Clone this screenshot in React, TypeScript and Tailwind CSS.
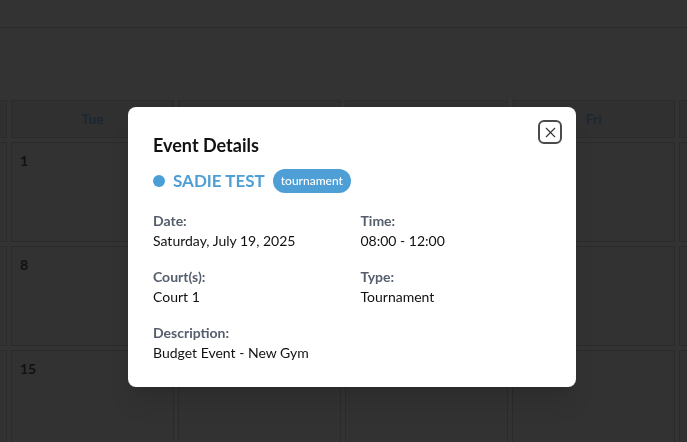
import React, { FC } from "react";
import { X } from "lucide-react";

const days = ["Sun", "Mon", "Tue", "Wed", "Thu", "Fri", "Sat"];

// dates shown in the first column of each week row (Tue column)
const weeks = [
  ["", "", "1", "2", "3", "4", "5"],
  ["", "7", "8", "9", "10", "11", "12"],
  ["", "14", "15", "16", "17", "18", "19"],
];

const App: FC = () => {
  return (
    <div
      className="relative w-[687px] h-[442px] overflow-hidden bg-[#333333]"
      style={{ fontFamily: "Lato, 'Noto Sans', sans-serif" }}
    >
      {/* Top bar */}
      <div className="h-[28px] border-b border-[#2a2a2a]" />

      {/* Calendar (scrolled so Tue is first visible column) */}
      <div className="pt-[72px] ml-[-323px]">
        <div className="grid grid-cols-[repeat(7,163px)] gap-1">
          {days.map((d) => (
            <div
              key={d}
              className="h-[38px] flex items-center justify-center border border-[#2b2b2b] bg-[#303030] text-sm font-bold text-[#1c2733]"
            >
              {/* only these two are readable behind the dialog */}
              {d === "Tue" || d === "Fri" ? d : ""}
            </div>
          ))}
          {weeks.flat().map((n, i) => (
            <div
              key={i}
              className="h-[100px] p-2 border border-[#2b2b2b] bg-[#323232] text-sm font-bold text-[#111111]"
            >
              {i % 7 === 2 ? n : ""}
            </div>
          ))}
        </div>
      </div>

      {/* Dialog */}
      <div className="fixed inset-0 flex items-start justify-start pt-[107px] pl-[128px]">
        <div className="relative w-[448px] bg-white rounded-lg shadow-xl pt-6 pb-6 pl-[25px] pr-6">
          <button className="absolute top-[13px] right-[14px] w-6 h-6 flex items-center justify-center rounded-md border-2 border-[#4b4b4b] text-[#333]">
            <X size={17} strokeWidth={1.5} />
          </button>

          <h2 className="text-lg font-bold text-[#111] mb-2">Event Details</h2>

          <div className="flex items-center gap-2 h-7 mb-4">
            <span className="w-3 h-3 rounded-full bg-[#4a9fd8]" />
            <span className="text-[17px] font-bold text-[#4e9fd6]">SADIE TEST</span>
            <span className="px-2 h-6 flex items-center rounded-full bg-[#4f9fd7] text-xs font-medium text-white">
              tournament
            </span>
          </div>

          <div className="grid grid-cols-2 gap-4 text-sm">
            <div>
              <div className="font-bold text-[#555e6c]">Date:</div>
              <div className="text-[#111]">Saturday, July 19, 2025</div>
            </div>
            <div>
              <div className="font-bold text-[#555e6c]">Time:</div>
              <div className="text-[#111]">08:00 - 12:00</div>
            </div>
            <div>
              <div className="font-bold text-[#555e6c]">Court(s):</div>
              <div className="text-[#111]">Court 1</div>
            </div>
            <div>
              <div className="font-bold text-[#555e6c]">Type:</div>
              <div className="text-[#111]">Tournament</div>
            </div>
            <div className="col-span-2">
              <div className="font-bold text-[#555e6c]">Description:</div>
              <div className="text-[#111]">Budget Event - New Gym</div>
            </div>
          </div>
        </div>
      </div>
    </div>
  );
};

export default App;
